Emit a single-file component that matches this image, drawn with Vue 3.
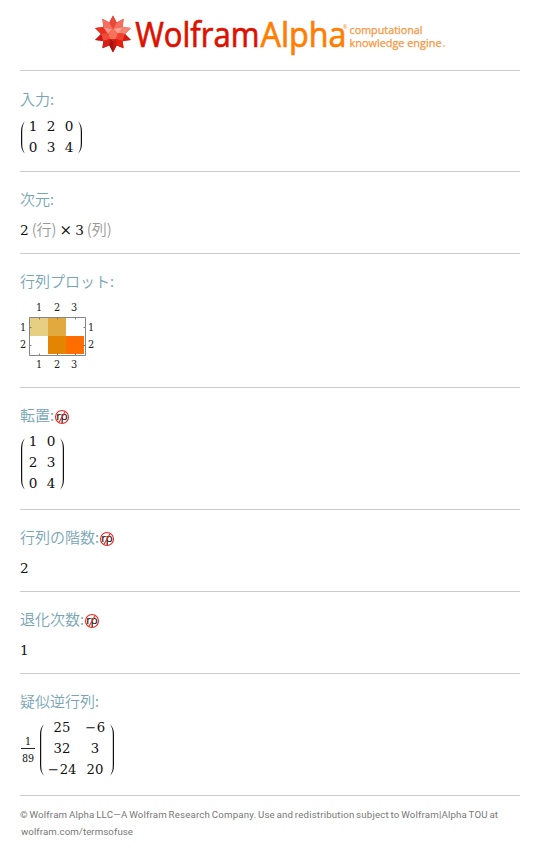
<script setup>
const sections = [
  { title: '入力', kind: 'matrix', rows: [['1', '2', '0'], ['0', '3', '4']] },
  { title: '次元', kind: 'dims' },
  { title: '行列プロット', kind: 'plot' },
  { title: '転置', kind: 'matrix', rp: true, rows: [['1', '0'], ['2', '3'], ['0', '4']] },
  { title: '行列の階数', kind: 'value', rp: true, value: '2' },
  { title: '退化次数', kind: 'value', rp: true, value: '1' },
  { title: '疑似逆行列', kind: 'matrix', fraction: true, rows: [['25', '−6'], ['32', '3'], ['−24', '20']] },
]
const parenPath = (n) => {
  const h = n === 2 ? 33 : 52
  return `M5.2 .2Q1 3.4 1 11V${h - 11}Q1 ${h - 3.4} 5.2 ${h - 0.2}Q2.2 ${h - 3.4} 2.2 ${h - 11}V11Q2.2 3.4 5.2 .2Z`
}
</script>

<template>
  <main class="page">
    <header class="brand">
      <svg width="352" height="60" viewBox="94 5 352 60" role="img" aria-label="WolframAlpha">
        <polygon fill="#e5281b" points="113,15.5 116.7,22.6 123.6,18.8 122.7,26.9 131,28 125,34 131,40 122.7,41.1 123.6,48.2 116.7,45.4 113,52.5 109.3,45.4 102.4,48.2 103.3,41.1 95,40 101,34 95,28 103.3,26.9 102.4,18.8 109.3,22.6" />
        <polygon fill="#e8483a" points="113,15.5 116.7,22.6 113,29 109.3,22.6" />
        <polygon fill="#f5705f" points="102.4,18.8 109.3,22.6 113,29 103.3,26.9" />
        <polygon fill="#f3705e" points="123.6,18.8 116.7,22.6 113,29 122.7,26.9" />
        <polygon fill="#e8311f" points="95,28 103.3,26.9 108,33 101,34" />
        <polygon fill="#f58573" points="131,28 122.7,26.9 118,33 125,34" />
        <polygon fill="#f89484" points="103.3,26.9 113,29 108,34" />
        <polygon fill="#fba493" points="122.7,26.9 113,29 118,34" />
        <polygon fill="#f9705b" points="113,29 118,34 116,39 110,39 108,34" />
        <polygon fill="#f04b39" points="101,34 108,33 110,39 103.3,41.1" />
        <polygon fill="#ee4333" points="125,34 118,33 116,39 122.7,41.1" />
        <polygon fill="#cc1611" points="95,40 101,34 103.3,41.1" />
        <polygon fill="#d51c14" points="131,40 125,34 122.7,41.1" />
        <polygon fill="#d32118" points="102.4,48.2 103.3,41.1 110,39 109.3,45.4" />
        <polygon fill="#e6200f" points="123.6,48.2 122.7,41.1 116,39 116.7,45.4" />
        <polygon fill="#a91012" points="110,39 113,41 113,52.5 109.3,45.4" />
        <polygon fill="#c51812" points="116,39 113,41 113,52.5 116.7,45.4" />
        <text class="word wolfram" x="135.2" y="46.5" textLength="124.3" lengthAdjust="spacingAndGlyphs">Wolfram</text>
        <text class="word alpha" x="260.5" y="46.5" textLength="86" lengthAdjust="spacingAndGlyphs">Alpha</text>
        <text class="mark" x="343" y="29">®</text>
        <text class="tag" x="349.5" y="34" textLength="73" lengthAdjust="spacingAndGlyphs">computational</text>
        <text class="tag" x="349.5" y="46.7" textLength="92" lengthAdjust="spacingAndGlyphs">knowledge engine</text>
        <path d="M442.5 46h2.5" stroke="#f8a257" stroke-width="1" />
      </svg>
    </header>

    <section v-for="s in sections" :key="s.title" :class="['pod', s.kind, { tall: s.rows && s.rows.length === 3 }]">
      <h2>
        <span>{{ s.title }}:</span>
        <svg v-if="s.rp" class="rp" width="16" height="16" viewBox="0 0 16 16">
          <text x="2.2" y="11" textLength="11.5" lengthAdjust="spacingAndGlyphs">rp</text>
          <circle cx="8" cy="8" r="6.5" />
          <path d="M4.8 13.6 11.2 2.4" />
        </svg>
      </h2>

      <div v-if="s.kind === 'matrix'" class="expr">
        <span v-if="s.fraction" class="fraction"><span>1</span><span>89</span></span>
        <svg class="paren" width="6" :height="s.rows.length === 2 ? 33 : 52"><path :d="parenPath(s.rows.length)" /></svg>
        <div :class="['cells', { wide: s.fraction, three: s.rows[0].length === 3 }]">
          <template v-for="(r, i) in s.rows" :key="i">
            <span v-for="(c, j) in r" :key="j"><i v-if="c[0] === '−'">−</i>{{ c.replace('−', '') }}</span>
          </template>
        </div>
        <svg class="paren right" width="6" :height="s.rows.length === 2 ? 33 : 52"><path :d="parenPath(s.rows.length)" /></svg>
      </div>

      <div v-else-if="s.kind === 'dims'" class="line">
        <span>2</span><small>(行)</small><span class="times">×</span><span>3</span><small>(列)</small>
      </div>

      <svg v-else-if="s.kind === 'plot'" class="chart" width="80" height="74" viewBox="20 300 80 74">
        <g shape-rendering="crispEdges">
          <rect x="30" y="318" width="18" height="18" fill="#e6cf82" />
          <rect x="48" y="318" width="18" height="18" fill="#e2aa3e" />
          <rect x="48" y="336" width="18" height="18" fill="#e48500" />
          <rect x="66" y="336" width="18" height="18" fill="#ff6d00" />
        </g>
        <path d="M29.5 317.5H85.5V355.5H29.5ZM39.5 318v1.5M57.5 318v1.5M75.5 318v1.5M39.5 355v-1.5M57.5 355v-1.5M75.5 355v-1.5M30 327.5h1.5M30 345.5h1.5M85 327.5h-1.5M85 345.5h-1.5" fill="none" stroke="#666" stroke-width=".8" />
        <text x="39" y="311">1</text><text x="57" y="311">2</text><text x="74" y="311">3</text>
        <text x="39" y="368">1</text><text x="57" y="368">2</text><text x="74" y="368">3</text>
        <text x="23" y="331">1</text><text x="23" y="348">2</text>
        <text x="91" y="331">1</text><text x="91" y="348">2</text>
      </svg>

      <div v-else class="line">{{ s.value }}</div>
    </section>

    <footer>
      <p><svg width="478" height="17"><text x="0" y="12" textLength="478">© Wolfram Alpha LLC—A Wolfram Research Company. Use and redistribution subject to Wolfram|Alpha TOU at</text></svg></p>
      <p><svg width="478" height="17"><text x="1" y="12" textLength="112">wolfram.com/termsofuse</text></svg></p>
    </footer>
  </main>
</template>

<style>
body { background: #fff; }
</style>

<style scoped>
.page { width: 500px; height: 854px; padding: 0 20px; color: #111; font-family: "DejaVu Serif", serif; }
.brand { height: 70px; box-sizing: border-box; padding: 5px 0 0 74px; }
.brand svg { display: block; }
.word { font: 400 34px "Open Sans", sans-serif; stroke-width: .7; }
.wolfram { fill: #dd1100; stroke: #dd1100; }
.alpha { fill: #ff7e00; stroke: #ff7e00; }
.mark { font: 5px "Open Sans", sans-serif; fill: #ff7e00; }
.tag { font: 400 10.3px "Open Sans", sans-serif; fill: #f9953c; stroke: #f9953c; stroke-width: .25; }
.pod { border-top: 1px solid #ccc; padding: 17px 0 13px; }
.pod:nth-of-type(1) { padding-top: 18px; }
h2 { display: flex; height: 21px; margin: 0; color: #77a5b6; font: 350 15px/20px "Noto Sans CJK JP", sans-serif; white-space: nowrap; }
.pod:nth-of-type(1) h2 { height: 20px; }
.rp { margin: 4px 0 0; overflow: visible; }
.rp text { font: 10.5px "Open Sans", sans-serif; fill: #111; stroke: #111; stroke-width: .2; }
.rp circle, .rp path { fill: none; stroke: #ee2920; stroke-width: 1.1; }
.expr { display: flex; padding-top: 7px; }
.tall { padding-bottom: 15px; }
.tall .expr { padding-top: 5px; }
.paren { margin-top: 5px; fill: #111; }
.tall .paren { margin-top: 7px; }
.right { transform: scaleX(-1); }
.cells { display: grid; grid-template-columns: repeat(2, 18px); grid-auto-rows: 21px; margin: 0 -2px; padding-right: 1px; font-size: 13.6px; line-height: 21px; text-align: center; }
.three { grid-template-columns: repeat(3, 18px); }
.wide { grid-template-columns: 34px 32px; margin: 0 -2px 0 0; padding-right: 0; font-size: 13.2px; }
.cells span { display: flex; justify-content: center; }
.cells i { font-style: normal; margin-right: 1px; }
.line { height: 20px; padding-top: 10px; display: flex; font-size: 13.6px; line-height: 21px; }
.line small { color: #999; font: 350 15px/18px "Noto Sans CJK JP", sans-serif; margin-left: 3px; }
.times { margin: 0 3px 0 3px; font-size: 15px; }
.chart { display: block; margin-top: 8px; }
.chart text { font: 10.8px "DejaVu Serif Condensed", "DejaVu Serif", serif; text-anchor: middle; fill: #222; }
.fraction { width: 14px; margin: 18px 4px 0 1px; font: 10.6px/18px "DejaVu Serif Condensed", "DejaVu Serif", serif; text-align: center; }
.fraction span { display: block; }
.fraction span:first-child { border-bottom: 1px solid #222; line-height: 13px; }
footer { border-top: 1px solid #ccc; padding-top: 10px; }
footer p { height: 17px; margin: 0; }
footer svg { display: block; }
footer text { font: 9.7px Roboto, sans-serif; word-spacing: -.9px; fill: #777; }
</style>
